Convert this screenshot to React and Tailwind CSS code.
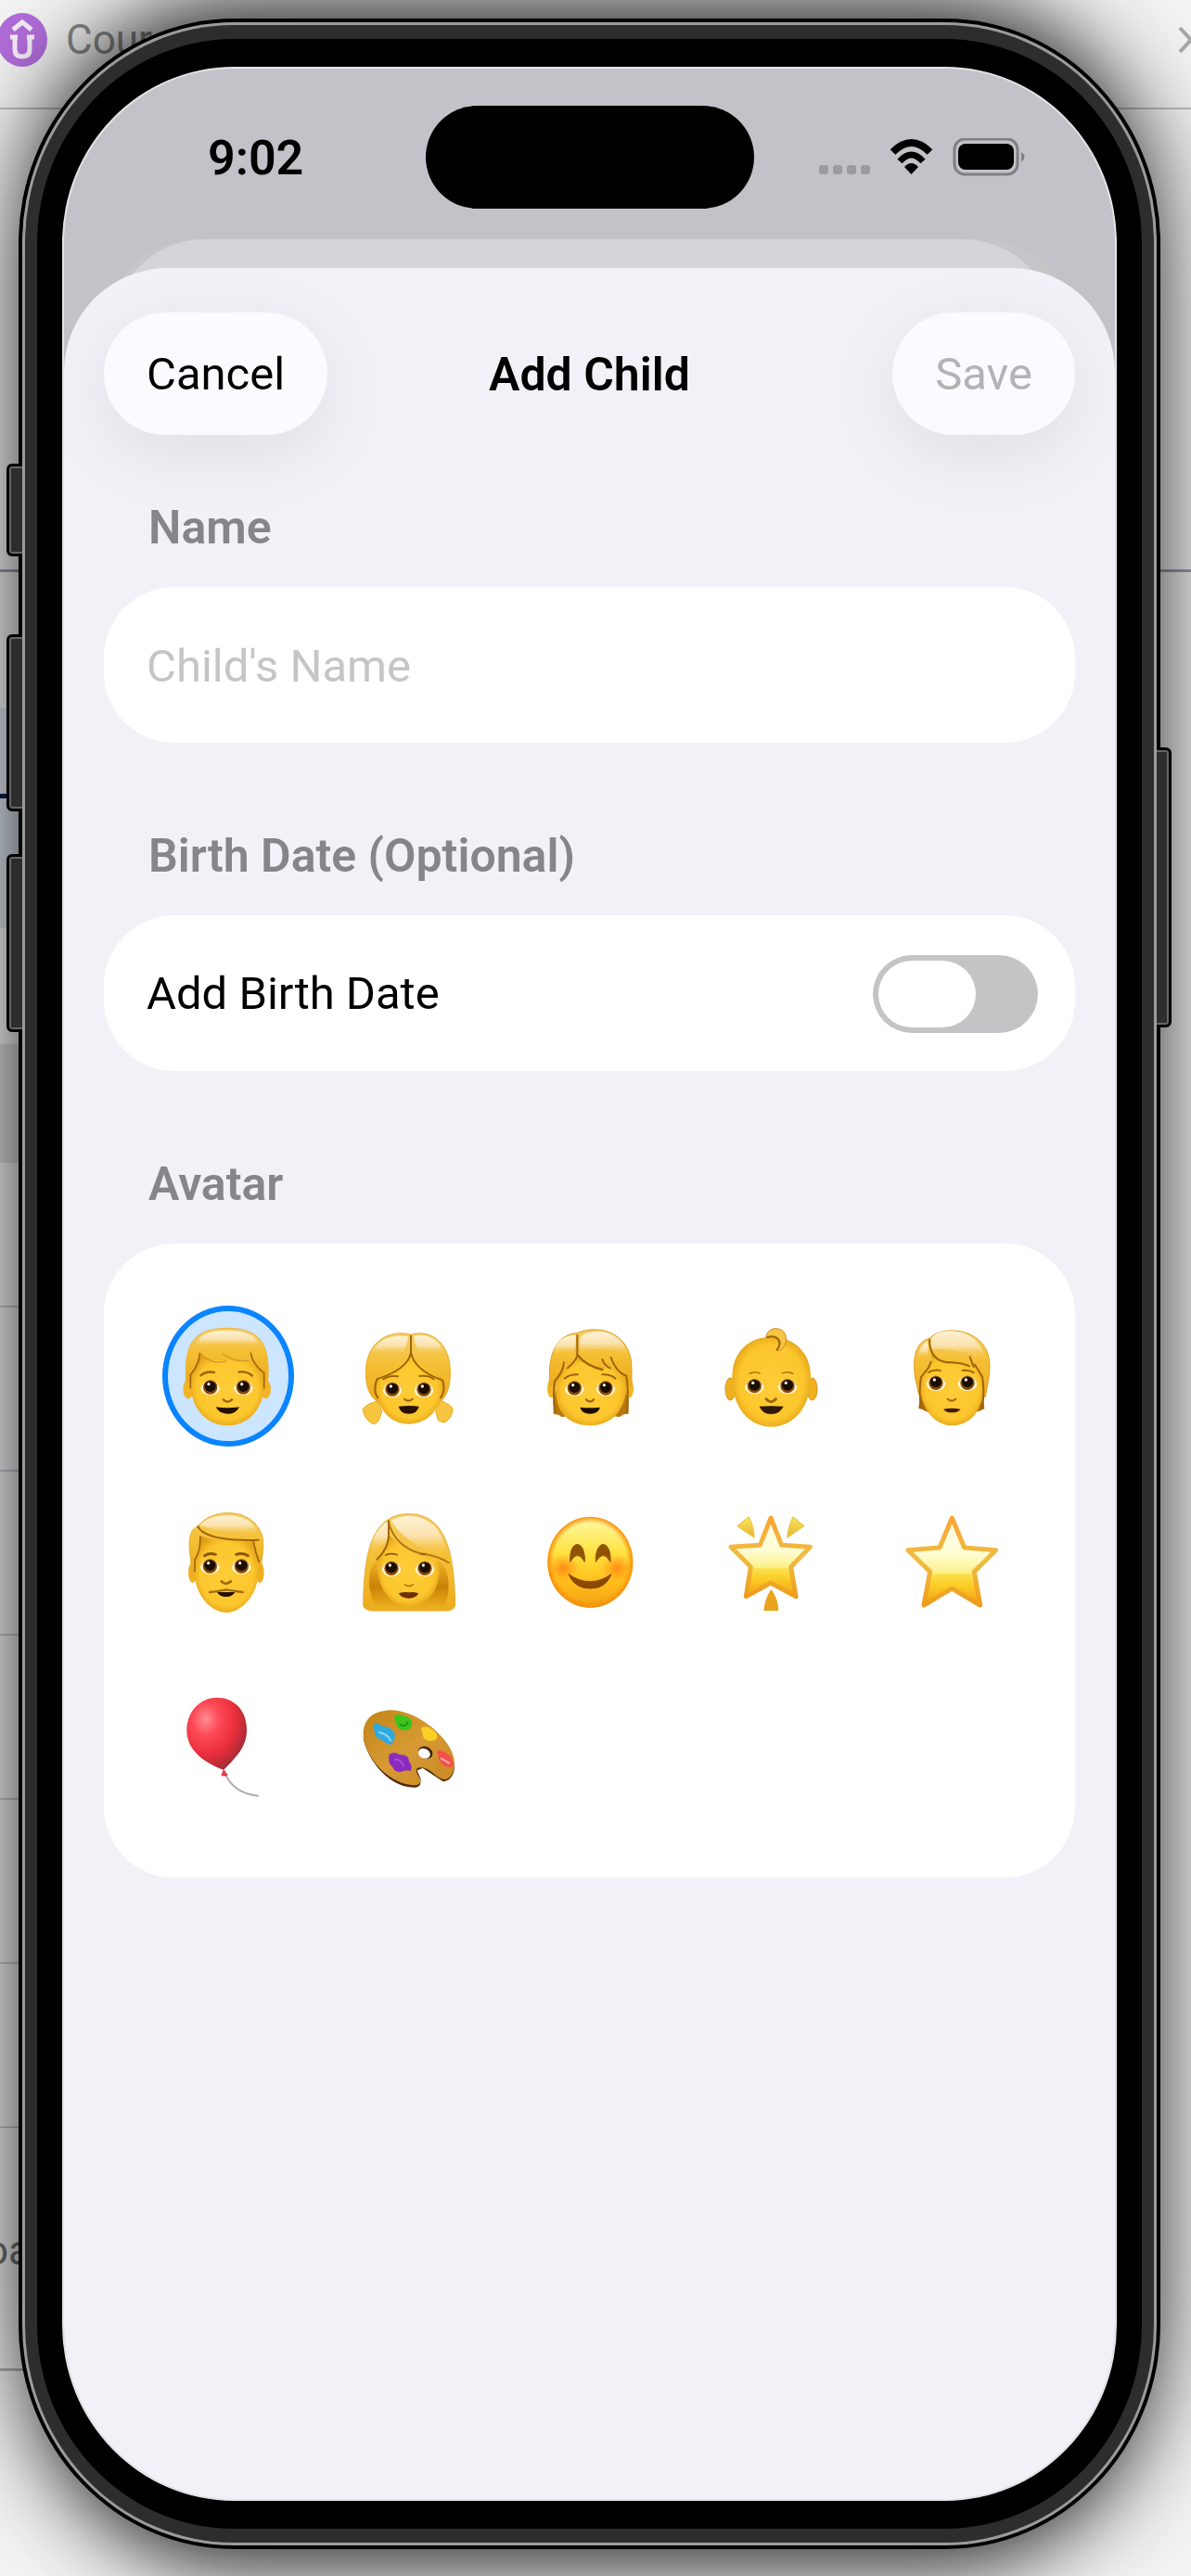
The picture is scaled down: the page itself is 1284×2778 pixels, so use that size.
import React, { useState } from 'react';
import clsx from 'clsx';

// Shared gradients for the avatar drawings
const AvatarDefs = () => (
  <svg width="0" height="0" className="absolute" aria-hidden="true">
    <defs>
      <radialGradient id="skin" cx="0.5" cy="0.5" r="0.55">
        <stop offset="0" stopColor="#ffcd38" />
        <stop offset="0.75" stopColor="#fcc62d" />
        <stop offset="1" stopColor="#e0a017" />
      </radialGradient>
      <linearGradient id="hair" x1="0" y1="0" x2="0" y2="1">
        <stop offset="0" stopColor="#f6cf6c" />
        <stop offset="0.45" stopColor="#f5bf34" />
        <stop offset="1" stopColor="#edab1c" />
      </linearGradient>
      <linearGradient id="shine" x1="0" y1="0" x2="0" y2="1">
        <stop offset="0" stopColor="#fdf2d4" />
        <stop offset="0.5" stopColor="#fae2ad" />
        <stop offset="1" stopColor="#f5c340" stopOpacity="0" />
      </linearGradient>
      <linearGradient id="shade" x1="0" y1="0" x2="0" y2="1">
        <stop offset="0" stopColor="#f2b82a" />
        <stop offset="0.55" stopColor="#c98208" />
        <stop offset="1" stopColor="#f0b21f" />
      </linearGradient>
      <linearGradient id="smile" x1="0" y1="0" x2="0" y2="1">
        <stop offset="0" stopColor="#fff9a8" />
        <stop offset="0.4" stopColor="#ffe23f" />
        <stop offset="0.7" stopColor="#ffbf1c" />
        <stop offset="1" stopColor="#f4a012" />
      </linearGradient>
      <radialGradient id="smileEdge" cx="0.5" cy="0.5" r="0.5">
        <stop offset="0.86" stopColor="#f88e0c" stopOpacity="0" />
        <stop offset="1" stopColor="#f88e0c" />
      </radialGradient>
      <radialGradient id="blush">
        <stop offset="0" stopColor="#ff7a0e" stopOpacity="0.8" />
        <stop offset="1" stopColor="#ff8a12" stopOpacity="0" />
      </radialGradient>
      <linearGradient id="starFill" x1="0" y1="0" x2="0" y2="1">
        <stop offset="0" stopColor="#fffef0" />
        <stop offset="0.42" stopColor="#fffdd2" />
        <stop offset="0.63" stopColor="#fdf08a" />
        <stop offset="0.65" stopColor="#fce04a" />
        <stop offset="0.78" stopColor="#fbcc26" />
        <stop offset="1" stopColor="#f59f14" />
      </linearGradient>
      <linearGradient id="starEdge" x1="0" y1="0" x2="0" y2="1">
        <stop offset="0" stopColor="#fba634" />
        <stop offset="0.5" stopColor="#eebd45" />
        <stop offset="1" stopColor="#ee9c1a" />
      </linearGradient>
      <linearGradient id="ray" x1="0" y1="0" x2="0" y2="1">
        <stop offset="0" stopColor="#fbe65c" />
        <stop offset="1" stopColor="#e3b431" />
      </linearGradient>
      <radialGradient id="balloon" cx="0.32" cy="0.3" r="0.75">
        <stop offset="0" stopColor="#ff8d92" />
        <stop offset="0.3" stopColor="#fd4a57" />
        <stop offset="0.65" stopColor="#ea2f3b" />
        <stop offset="1" stopColor="#a32a35" />
      </radialGradient>
      <linearGradient id="wood" x1="0" y1="0" x2="1" y2="1">
        <stop offset="0" stopColor="#c38516" />
        <stop offset="0.5" stopColor="#d79a34" />
        <stop offset="1" stopColor="#c98824" />
      </linearGradient>
    </defs>
  </svg>
);

const Eye = ({ x, y }) => (
  <g>
    <ellipse cx={x} cy={y + 2} rx="31" ry="24" fill="#fff6d6" />
    <circle cx={x} cy={y} r="23" fill="#8a4b08" />
    <circle cx={x} cy={y - 3} r="18" fill="#1a0d04" />
    <circle cx={x - 5} cy={y - 10} r="5" fill="#fdf3df" />
    <path d={`M${x - 31} ${y - 2}Q${x} ${y - 42} ${x + 31} ${y - 2}`} fill="none" stroke="#c9890f" strokeWidth="2" />
  </g>
);

const Line = ({ d, w = 6, c = '#a06508' }) => (
  <path d={d} fill="none" stroke={c} strokeWidth={w} strokeLinecap="round" strokeLinejoin="round" />
);

const Boy = () => (
  <>
    <ellipse cx="153" cy="324" rx="17" ry="31" fill="#f2b424" />
    <ellipse cx="403" cy="324" rx="17" ry="31" fill="#f2b424" />
    <path d="M146 300C140 190 160 127 278 127S418 190 410 300Z" fill="url(#hair)" stroke="#e9b43c" strokeWidth="3" />
    <path d="M160 285C170 250 186 240 190 205Q225 240 275 228Q310 238 356 232C366 262 392 255 398 290C404 370 360 442 280 442S154 370 160 285Z" fill="url(#skin)" />
    <path d="M180 190C178 150 215 135 278 135S380 150 382 190Q280 165 180 190Z" fill="url(#shine)" />
    <Line d="M190 208Q188 245 160 278V320" w={5} />
    <Line d="M355 208Q362 245 398 272V320" w={5} />
    <Line d="M192 210Q230 248 277 233" w={4} c="#d39a20" />
    <Line d="M265 210Q300 238 345 232" w={4} c="#d39a20" />
    <Line d="M193 280Q212 264 237 270" w={7} />
    <Line d="M316 269Q342 265 360 281" w={7} />
    <Eye x={224} y={318} />
    <Eye x={331} y={318} />
    <Line d="M266 358Q280 372 294 358" w={7} />
    <path d="M242 382Q280 388 318 382Q308 404 280 404T242 382Z" fill="#231103" />
  </>
);

const Girl = () => (
  <>
    <path d="M764 364Q735 368 716 388Q720 420 748 437Q762 436 768 426L778 398Z" fill="#f8c540" stroke="#e5a823" strokeWidth="3" />
    <path d="M968 362Q995 370 1008 388Q1004 418 982 432Q968 432 960 424L952 396Z" fill="#f8c540" stroke="#e5a823" strokeWidth="3" />
    <path d="M872 148C810 130 726 165 726 270C726 330 745 355 775 372H960C985 352 1000 325 999 265C998 165 925 130 872 148Z" fill="url(#hair)" stroke="#e6ac2c" strokeWidth="3" />
    <path d="M872 205Q860 250 760 288C748 370 795 437 865 437S985 370 975 288Q885 250 872 205Z" fill="url(#skin)" />
    <path d="M745 215C755 165 810 145 863 154Q862 185 840 210Q790 185 745 215Z" fill="url(#shine)" />
    <path d="M980 215C970 165 925 142 882 153Q882 185 904 205Q950 190 980 215Z" fill="url(#shine)" />
    <Line d="M872 152V205Q865 258 762 292Q748 330 765 352" w={6} />
    <Line d="M872 205Q882 262 975 296Q985 330 968 352" w={6} />
    <Line d="M783 292Q802 278 830 283" w={6} />
    <Line d="M900 282Q930 278 946 292" w={6} />
    <Eye x={812} y={325} />
    <Eye x={914} y={325} />
    <Line d="M851 356Q864 368 877 356" w={6} />
    <path d="M832 380Q865 376 898 380Q892 404 865 404T832 380Z" fill="#2a1203" />
  </>
);

const Child = () => (
  <>
    <path d="M136 330L134 404L152 408L160 414L200 410V330Z" fill="#b5780e" />
    <path d="M376 330L377 404L362 406L348 414L310 410V330Z" fill="#b5780e" />
    <ellipse cx="128" cy="322" rx="14" ry="30" fill="#f2b424" />
    <ellipse cx="380" cy="322" rx="13" ry="30" fill="#f2b424" />
    <path d="M122 310C116 210 140 150 212 142C290 110 390 150 387 260V310Z" fill="url(#hair)" stroke="#dba02a" strokeWidth="3" />
    <path d="M142 320C140 280 170 260 178 252L212 218Q240 250 290 262L320 250L340 270L368 290C378 380 330 442 253 442S138 390 142 320Z" fill="url(#skin)" />
    <path d="M132 210C140 165 175 148 206 150Q208 180 200 205Q160 195 132 215Z" fill="url(#shine)" />
    <path d="M222 200C212 160 220 142 270 138S365 165 376 215Q300 185 222 200Z" fill="url(#shine)" />
    <Line d="M211 150V218Q200 240 180 256" w={6} />
    <Line d="M212 214Q240 250 292 261" w={7} />
    <Line d="M168 238Q165 270 138 298Q132 340 138 398" w={6} />
    <Line d="M292 228Q298 248 318 256M320 222Q334 266 370 282Q378 330 372 398" w={6} />
    <Line d="M170 290Q185 276 213 277M292 277Q320 276 335 290" w={6} />
    <Eye x={202} y={321} />
    <Eye x={303} y={321} />
    <Line d="M240 358Q253 372 264 358" w={7} />
    <path d="M220 383Q252 386 285 383Q278 404 252 404T220 383Z" fill="#1a0c02" />
  </>
);

const Baby = () => (
  <>
    <ellipse cx="706" cy="324" rx="16" ry="36" fill="#f0b020" stroke="#d29414" strokeWidth="3" />
    <ellipse cx="971" cy="324" rx="16" ry="36" fill="#f0b020" stroke="#d29414" strokeWidth="3" />
    <path d="M712 285C712 200 770 155 838 155S966 200 966 285C966 390 905 446 838 446S712 390 712 285Z" fill="url(#skin)" />
    <path d="M822 158C822 135 845 123 865 130C892 138 894 180 868 198Q858 202 855 197Q872 178 855 160Q840 152 822 158Z" fill="#f7c544" stroke="#c88b12" strokeWidth="3" />
    <Line d="M826 156Q858 148 866 172Q866 188 856 197" w={6} />
    <Line d="M768 274Q785 266 802 273M874 273Q892 266 908 274" w={4} />
    <Eye x={784} y={314} />
    <Eye x={891} y={314} />
    <Line d="M822 356Q838 374 853 356" w={9} />
    <path d="M800 380Q838 378 878 380Q866 405 838 405T800 380Z" fill="#2f170a" />
  </>
);

const Person = () => (
  <>
    <path d="M275 330L268 386L280 390L300 400L330 390V320Z" fill="#a86a0c" />
    <path d="M475 330L481 388L462 396L440 400L420 390V320Z" fill="#a86a0c" />
    <path d="M268 340C262 300 252 290 254 235C258 180 285 165 303 160C350 110 500 130 498 250C496 300 490 310 484 350Z" fill="url(#hair)" stroke="#dca12a" strokeWidth="3" />
    <path d="M272 290L294 252L312 240L308 200Q340 240 430 246L462 262L480 300C480 400 430 442 376 442S268 390 272 290Z" fill="url(#skin)" />
    <path d="M308 195C302 150 325 136 372 136S470 160 486 230Q400 190 308 195Z" fill="url(#shine)" />
    <path d="M266 225C268 190 285 175 298 170V215Q280 212 266 225Z" fill="url(#shine)" />
    <Line d="M303 165Q305 238 372 238Q410 240 432 250" w={6} />
    <Line d="M308 236L300 255L276 285Q268 330 276 380M434 220L446 252M450 245L474 284Q482 330 474 380" w={6} />
    <Line d="M300 270Q315 260 338 264M410 264Q432 260 446 271" w={6} />
    <Eye x={324} y={304} />
    <Eye x={426} y={304} />
    <Line d="M362 356Q376 368 388 356" w={6} />
    <path d="M348 389Q376 384 404 389Q396 400 376 400T348 389Z" fill="#3c1d05" />
  </>
);

const Man = () => (
  <>
    <ellipse cx="167" cy="914" rx="14" ry="34" fill="#efb020" />
    <ellipse cx="384" cy="914" rx="14" ry="34" fill="#efb020" />
    <path d="M168 915C145 800 160 775 184 765C230 705 340 710 376 765C405 800 395 850 384 915Z" fill="url(#hair)" stroke="#e3aa2c" strokeWidth="3" />
    <path d="M172 890L190 830V795Q260 822 364 814L382 880C388 980 330 1044 276 1044S166 980 172 890Z" fill="url(#skin)" />
    <path d="M190 762C220 722 330 715 366 765Q376 785 372 795Q270 790 190 762Z" fill="url(#shine)" />
    <Line d="M184 766Q210 815 380 809" w={6} />
    <Line d="M192 798Q192 850 174 872V910M364 814Q370 850 382 880" w={5} />
    <Line d="M206 860Q220 850 241 856M308 856Q330 850 346 860" w={9} c="#8c560a" />
    <Eye x={223} y={894} />
    <Eye x={325} y={894} />
    <Line d="M260 943Q275 958 291 943" w={8} />
    <path d="M246 978H304Q296 993 275 993T246 978Z" fill="#241103" />
    <Line d="M222 978Q240 976 275 970Q310 976 329 978" w={7} c="#a86a0c" />
  </>
);

const Woman = () => (
  <>
    <path d="M718 1020C720 850 745 725 865 725S1012 850 1015 1020Q1012 1038 985 1038H748Q720 1036 718 1020Z" fill="url(#hair)" stroke="#e6ac2c" strokeWidth="3" />
    <path d="M765 870C720 900 735 1010 770 1034H970C1005 1000 1000 900 965 880Z" fill="url(#shade)" />
    <path d="M764 872Q800 835 804 795Q850 850 964 884C972 970 925 1024 865 1024S757 960 764 872Z" fill="url(#skin)" />
    <path d="M800 748C760 768 745 810 738 850Q770 840 795 810Z" fill="url(#shine)" />
    <path d="M808 748C840 725 915 722 958 775Q985 815 990 860Q870 840 808 748Z" fill="url(#shine)" />
    <path d="M798 748Q820 830 900 852Q960 860 996 884" fill="none" stroke="#b4770f" strokeWidth="6" />
    <Line d="M800 748V800Q796 840 762 872" w={6} />
    <Line d="M790 858Q808 850 828 857M904 855H918" w={5} c="#8a560c" />
    <Eye x={809} y={901} />
    <Eye x={917} y={901} />
    <Line d="M852 953Q866 964 879 953" w={4} />
    <path d="M832 982Q850 976 865 979Q880 976 897 982Q888 998 865 998T832 982Z" fill="#6d2f08" />
  </>
);

const Smile = () => (
  <>
    <ellipse cx="253" cy="881" rx="138" ry="147" fill="url(#smile)" />
    <ellipse cx="253" cy="881" rx="138" ry="147" fill="url(#smileEdge)" />
    <ellipse cx="166" cy="900" rx="52" ry="46" fill="url(#blush)" />
    <ellipse cx="340" cy="900" rx="52" ry="46" fill="url(#blush)" />
    <path d="M188 880C184 805 238 805 235 880Q212 838 188 880Z" fill="#915302" stroke="#915302" strokeWidth="3" />
    <path d="M271 880C268 805 322 805 318 880Q295 838 271 880Z" fill="#915302" stroke="#915302" strokeWidth="3" />
    <path d="M183 920Q253 968 321 920Q304 966 253 966T183 920Z" fill="#8a4a02" stroke="#8a4a02" strokeWidth="3" strokeLinejoin="round" />
  </>
);

const GlowingStar = () => (
  <>
    <path d="M729 764L766 735Q784 770 783 801Z" fill="url(#ray)" stroke="#ecc84a" strokeWidth="4" strokeLinejoin="round" />
    <path d="M944 764L909 735Q892 770 891 801Z" fill="url(#ray)" stroke="#ecc84a" strokeWidth="4" strokeLinejoin="round" />
    <path d="M838 972Q858 1000 860 1036H816Q820 1000 838 972Z" fill="#e9a31d" stroke="#e9a31d" strokeWidth="4" strokeLinejoin="round" />
    <path d="M837 738L872 826L964 832L902 896L918 992L837 948L757 992L772 896L708 832L802 826Z" fill="url(#starFill)" stroke="url(#starEdge)" strokeWidth="15" strokeLinejoin="round" />
  </>
);

const Star = () => (
  <path d="M376 738L416 834L518 842L448 912L467 1020L376 966L285 1020L305 912L234 842L336 834Z" fill="url(#starFill)" stroke="url(#starEdge)" strokeWidth="15" strokeLinejoin="round" />
);

const Balloon = () => (
  <>
    <path d="M268 384C285 435 325 462 380 467" fill="none" stroke="#a9a9a9" strokeWidth="6" />
    <path d="M267 382L260 398Q258 404 268 403Q282 404 280 398Z" fill="#e83a48" />
    <path d="M245 149C305 149 343 195 342 255C342 310 305 345 267 383C205 360 148 320 148 255C148 195 190 149 245 149Z" fill="url(#balloon)" />
  </>
);

const Palette = () => (
  <>
    <path d="M718 275C722 330 790 440 885 440C905 438 904 425 903 410L892 385L910 377L975 420C1005 420 1016 385 1012 365L940 330L890 322L800 300Z" fill="#4d2b0a" />
    <path d="M718 268C718 215 755 190 810 190C900 192 1012 290 1013 360C1012 395 998 414 980 414C955 412 935 376 905 375C870 378 905 405 903 420C900 432 890 434 875 432C790 425 718 330 718 268Z" fill="url(#wood)" />
    <ellipse cx="919" cy="327" rx="24" ry="19" transform="rotate(25 919 327)" fill="#3d2208" />
    <ellipse cx="915" cy="330" rx="20" ry="16" transform="rotate(25 915 330)" fill="#fff" />
    <path d="M750 238Q765 225 775 240Q815 245 820 268Q820 290 808 302Q790 298 775 284Q755 280 755 264Z" fill="#30a8e0" />
    <path d="M768 262Q795 265 808 290" fill="none" stroke="#8bd8f8" strokeWidth="6" />
    <path d="M817 212Q825 198 845 208Q872 210 876 232Q876 252 855 256Q830 256 824 234Z" fill="#3cc41c" />
    <path d="M836 235Q855 248 862 228" fill="none" stroke="#1e9410" strokeWidth="6" />
    <path d="M904 248Q925 238 940 252Q958 262 957 280Q945 294 925 288Q908 280 910 264Z" fill="#fbd026" />
    <path d="M955 322Q970 315 985 328Q1008 340 1010 368Q1000 380 980 370Q958 355 962 342Z" fill="#f4504a" />
    <path d="M968 345L998 362" stroke="#ffa199" strokeWidth="7" />
    <path d="M802 332Q820 322 835 334Q865 332 866 355Q880 375 870 386Q850 382 838 391Q815 388 812 372Q795 360 802 332Z" fill="#8b2bbd" />
    <path d="M818 350Q838 345 850 372" fill="none" stroke="#a94fd6" strokeWidth="6" />
  </>
);

const avatars = [
  { name: 'Boy', view: '120 108 324 348', Art: Boy },
  { name: 'Girl', view: '704 108 324 348', Art: Girl },
  { name: 'Child', view: '90 108 324 348', Art: Child },
  { name: 'Baby', view: '675 108 324 348', Art: Baby },
  { name: 'Person', view: '213 108 324 348', Art: Person },
  { name: 'Man', view: '120 705 324 348', Art: Man },
  { name: 'Woman', view: '704 705 324 348', Art: Woman },
  { name: 'Smile', view: '90 705 324 348', Art: Smile },
  { name: 'Glowing star', view: '675 705 324 348', Art: GlowingStar },
  { name: 'Star', view: '213 705 324 348', Art: Star },
  { name: 'Balloon', view: '120 135 324 348', Art: Balloon },
  { name: 'Palette', view: '704 135 324 348', Art: Palette },
];

// Desktop page that shows around the device
const Backdrop = () => (
  <div className="absolute inset-0 flex flex-col bg-[#f4f4f4]" aria-hidden="true">
    <div className="flex h-[118px] shrink-0 items-start justify-between border-b-2 border-[#bdbdbd] pt-3.5">
      <div className="flex items-center gap-5">
        <svg width="54" height="58" viewBox="0 0 54 58" className="-ml-[3px]">
          <ellipse cx="27" cy="29" rx="27" ry="29" fill="#b26ddb" />
          <path d="M17 18L27 10L37 18M19 26V39Q19 47 27 47T35 39V26M22 26H14M40 26H32" fill="none" stroke="#f5eef8" strokeWidth="5" />
        </svg>
        <span className="text-[44px] leading-[58px] text-[#8b8b8b]">Cour</span>
      </div>
      <svg width="28" height="30" viewBox="0 0 28 30" className="mt-3.5 -mr-3.5">
        <path d="M2 2L26 28M26 2L2 28" stroke="#a8a8a8" strokeWidth="4" />
      </svg>
    </div>
    <div className="h-[499px] shrink-0 border-b-3 border-[#9a9db0]" />
    <div className="w-1/2">
      <div className="h-[146px]" />
      <div className="h-[98px] border-b-5 border-[#0c1f50] bg-[#dfe1ee]" />
      <div className="h-[140px] bg-[#dce2ec]" />
      <div className="h-[125px]" />
      <div className="h-[128px] bg-[#dcdcdc]" />
      {[0, 1, 2, 3, 4, 5].map((row) => (
        <div key={row} className={clsx('border-b-2 border-[#c9cad2]', row === 0 ? 'h-[156px]' : 'h-[177px]')} />
      ))}
      <div className="h-[262px] border-b-3 border-[#b5b5b5] pt-[102px]">
        <span className="-ml-4 block text-[44px] leading-[60px] text-[#707070]">oa</span>
      </div>
    </div>
  </div>
);

const StatusIcons = () => (
  <svg width="224" height="42" viewBox="0 0 224 42" role="img" aria-label="Wi-Fi on, battery full">
    <g fill="#9b9b9f">
      <rect x="0" y="29" width="10" height="10" rx="3" />
      <rect x="15" y="29" width="10" height="10" rx="3" />
      <rect x="30" y="29" width="10" height="10" rx="3" />
      <rect x="45" y="29" width="10" height="10" rx="3" />
    </g>
    <path d="M79.500 15Q99.500 -5 119.500 15" fill="none" stroke="#000" strokeWidth="8" />
    <path d="M87 25Q99.500 11 112 25" fill="none" stroke="#000" strokeWidth="7" />
    <path d="M92 31Q99.500 23 107 31L99.500 39Z" fill="#000" />
    <rect x="146" y="1" width="68" height="38" rx="11" fill="none" stroke="#808084" strokeWidth="3" />
    <rect x="150" y="6" width="60" height="28" rx="8" fill="#000" />
    <path d="M218 15Q225 20 218 26Z" fill="#808084" />
  </svg>
);

const Section = ({ title, children }) => (
  <section>
    <h2 className="mb-8 pt-0.5 pl-12 text-[50px] leading-[64px] font-semibold text-[#85858a]">{title}</h2>
    {children}
  </section>
);

const AddChildSheet = () => {
  const [name, setName] = useState('');
  const [hasBirthDate, setHasBirthDate] = useState(false);
  const [avatar, setAvatar] = useState('Boy');

  return (
    <div className="relative z-10 -mt-[109px] flex-1 rounded-t-[112px] bg-[#f2f1f7] px-[43px] pt-12 pb-16">
      <header className="grid grid-cols-[1fr_auto_1fr] items-center">
        <button
          type="button"
          className="h-[132px] justify-self-start rounded-full bg-[#fbfbff] px-[46px] pt-0.5 text-[49px] text-black shadow-[0_20px_80px_rgba(0,0,0,0.08)]"
        >
          Cancel
        </button>
        <h1 className="pt-0.5 text-[50px] font-semibold text-black">Add Child</h1>
        <button
          type="button"
          disabled={!name}
          className="h-[132px] justify-self-end rounded-full bg-[#fbfbff] px-[46px] pt-0.5 text-[49px] text-black shadow-[0_20px_80px_rgba(0,0,0,0.08)] disabled:text-[#b3b3b6]"
        >
          Save
        </button>
      </header>

      <div className="mt-[66px] flex flex-col gap-[88px]">
        <Section title="Name">
          <input
            type="text"
            aria-label="Name"
            value={name}
            onChange={(e) => setName(e.target.value)}
            placeholder="Child's Name"
            className="block h-[168px] w-full rounded-[76px] bg-white px-[46px] pt-0.5 text-[49px] text-black outline-none placeholder:text-[#c5c5c7]"
          />
        </Section>

        <Section title="Birth Date (Optional)">
          <label className="flex h-[168px] items-center justify-between rounded-[76px] bg-white pt-0.5 pr-10 pl-[46px] text-[49px] text-black">
            Add Birth Date
            <input
              type="checkbox"
              role="switch"
              checked={hasBirthDate}
              onChange={(e) => setHasBirthDate(e.target.checked)}
              className="flex h-[84px] w-[178px] appearance-none items-center rounded-full bg-[#c4c4c6] px-1.5 before:h-[72px] before:w-[105px] before:rounded-full before:bg-white checked:justify-end checked:bg-[#34c759]"
            />
          </label>
        </Section>

        <Section title="Avatar">
          <div className="grid grid-cols-5 justify-items-center gap-y-12 rounded-[76px] bg-white px-9 pt-[67px] pb-[65px]">
            {avatars.map(({ name: label, view, Art }) => (
              <button
                key={label}
                type="button"
                aria-label={label}
                aria-pressed={avatar === label}
                onClick={() => setAvatar(label)}
                className={clsx(
                  'flex h-[152px] w-[142px] items-center justify-center rounded-[50%] border-6',
                  avatar === label ? 'border-[#0a84ff] bg-[#cce6ff]' : 'border-transparent'
                )}
              >
                <svg width="108" height="116" viewBox={view} className="shrink-0">
                  <Art />
                </svg>
              </button>
            ))}
          </div>
        </Section>
      </div>
    </div>
  );
};

const SideButton = ({ className }) => (
  <div className={clsx('absolute w-[22px] rounded-md border-3 border-black bg-[#2d2d2d] ring-2 ring-[#666] ring-inset', className)} />
);

const App = () => (
  <div className="relative flex min-h-screen overflow-hidden pt-5 pr-[33px] pb-[29px] pl-5 font-['Roboto','Liberation_Sans',sans-serif]">
    <AvatarDefs />
    <Backdrop />

    <div className="relative flex flex-1">
      {/* Device frame, from the outer edge inwards */}
      <div className="relative flex flex-1 rounded-[232px/242px] bg-black p-1 shadow-[0_0_110px_10px_rgba(0,0,0,0.55),0_-50px_80px_-40px_rgba(0,0,0,0.6),0_50px_80px_-40px_rgba(0,0,0,0.6)]">
        <SideButton className="top-[480px] -left-[13px] h-[100px]" />
        <SideButton className="top-[664px] -left-[13px] h-[191px]" />
        <SideButton className="top-[901px] -left-[13px] h-[192px]" />
        <SideButton className="top-[786px] -right-[12px] h-[302px]" />
        <div className="relative flex flex-1 rounded-[228px/238px] bg-[#9b9b9b] p-[3px]">
          <div className="flex flex-1 rounded-[225px/235px] bg-[#2d2d2d] px-[13px] py-[15px]">
            <div className="flex flex-1 rounded-[212px/220px] bg-black px-[27px] py-[30px]">
              <div className="flex flex-1 flex-col overflow-hidden rounded-[185px/190px] border-2 border-[#e4e4e8] bg-[#c3c2c8]">
                <div className="grid h-[184px] grid-cols-[1fr_354px_1fr] items-center pt-10 pb-[33px]">
                  <span className="pl-[155px] pt-0.5 text-[52px] font-semibold text-black">9:02</span>
                  <div className="h-[111px] rounded-[56px] bg-black" />
                  <div className="pl-[70px]">
                    <StatusIcons />
                  </div>
                </div>
                <div className="mx-11 h-[140px] rounded-t-[100px] bg-[#c6c6c8]">
                  <div className="mr-5 ml-2 h-full rounded-t-[100px] bg-[#d5d4d9]" />
                </div>
                <AddChildSheet />
              </div>
            </div>
          </div>
        </div>
      </div>
    </div>
  </div>
);

export default App;
